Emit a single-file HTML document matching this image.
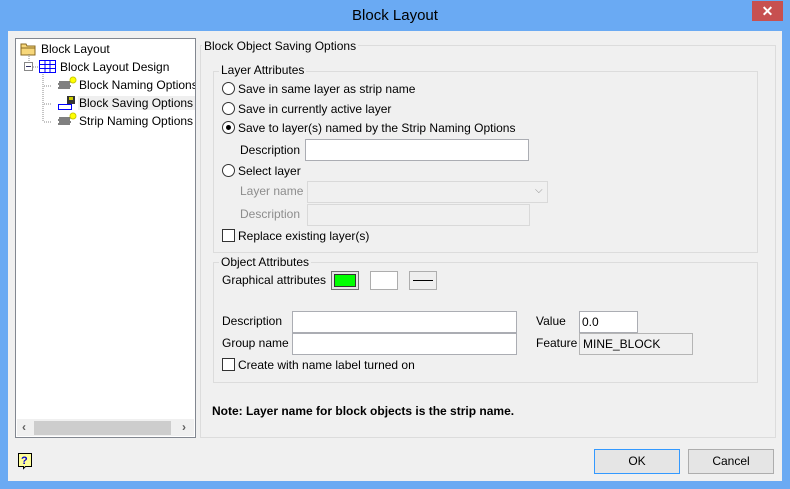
<!DOCTYPE html>
<html><head><style>
*{box-sizing:border-box;margin:0;padding:0}
body{width:790px;height:489px;background:#6aaaf3;font-family:"Liberation Sans",sans-serif;font-size:12px;color:#000;position:relative;overflow:hidden}
.a{position:absolute;white-space:nowrap}
.t{line-height:14px}
.grp{position:absolute;border:1px solid #dcdcdc}
.lbl{position:absolute;background:#f0f0f0;padding:0 2px;line-height:14px}
.in{position:absolute;background:#fff;border:1px solid #abadb3}
.dis{background:#f0f0f0;border:1px solid #d9d9d9}
.rad{position:absolute;width:13px;height:13px;border:1px solid #333;border-radius:50%;background:#fff}
.chk{position:absolute;width:13px;height:13px;border:1px solid #333;background:#fff}
.gray{color:#8d8d8d}
.btn{position:absolute;height:25px;border:1px solid #adadad;background:#e5e5e5;text-align:center;line-height:23px}
</style></head><body>
<div class="a" style="left:0;top:0;width:790px;height:31px;text-align:center;font-size:15px;line-height:31px;color:#000">Block Layout</div>
<div class="a" style="left:752px;top:1px;width:31px;height:20px;background:#c75050;color:#fff;text-align:center;font-size:14px;line-height:20px;font-weight:bold">✕</div>
<div class="a" style="left:8px;top:31px;width:774px;height:450px;background:#f0f0f0"></div>

<!-- tree -->
<div class="a" style="left:15px;top:38px;width:181px;height:400px;background:#fff;border:1px solid #828790;overflow:hidden">
 <svg class="a" style="left:0;top:0" width="62" height="95">
  <path d="M5 5h5l1 2h8v9H5z" fill="#f7d77a" stroke="#8a6a20"/><path d="M5 9h14" stroke="#8a6a20"/>
  <path d="M13 15v8M17 28h6M27 33v50M28 47h8M28 65h8M28 83h8" stroke="#888" stroke-dasharray="1,1"/>
  <rect x="8.5" y="23.5" width="8" height="8" fill="#fff" stroke="#888"/><path d="M10 27.5h5" stroke="#336"/>
  <g stroke="#00f" fill="none"><rect x="23.5" y="21.5" width="16" height="12"/><path d="M29 22v11M34 22v11M24 25.5h15M24 29.5h15"/></g>
  <g stroke="#000"><path d="M43 43h12M42 45h12M43 47h12M42 49h12"/><path d="M43 79h12M42 81h12M43 83h12M42 85h12"/></g>
  <circle cx="57" cy="41" r="3" fill="#ff0" stroke="#cc0"/><circle cx="57" cy="77" r="3" fill="#ff0" stroke="#cc0"/>
  <rect x="42.5" y="65.5" width="13" height="5" fill="#fff" stroke="#00f"/><rect x="51" y="57" width="8" height="8" fill="#333"/><rect x="53" y="58" width="4" height="3" fill="#cc0"/>
 </svg>
 <div class="a t" style="left:25px;top:3px">Block Layout</div>
 <div class="a t" style="left:44px;top:21px">Block Layout Design</div>
 <div class="a t" style="left:63px;top:39px">Block Naming Options</div>
 <div class="a t" style="left:62px;top:57px;background:#efefef;padding:0 1px;width:118px">Block Saving Options</div>
 <div class="a t" style="left:63px;top:75px">Strip Naming Options</div>
 <div class="a" style="left:1px;top:380px;width:177px;height:17px;background:#f0f0f0"></div>
 <div class="a" style="left:18px;top:382px;width:137px;height:14px;background:#cdcdcd"></div>
 <div class="a" style="left:6px;top:381px;color:#606060;font-size:12px;font-weight:bold">‹</div>
 <div class="a" style="left:166px;top:381px;color:#606060;font-size:12px;font-weight:bold">›</div>
</div>

<!-- outer group -->
<div class="grp" style="left:200px;top:45px;width:576px;height:393px"></div>
<div class="lbl" style="left:202px;top:39px">Block Object Saving Options</div>

<div class="grp" style="left:213px;top:71px;width:545px;height:182px"></div>
<div class="lbl" style="left:219px;top:63px">Layer Attributes</div>
<div class="rad" style="left:222px;top:82px"></div><div class="a t" style="left:238px;top:82px">Save in same layer as strip name</div>
<div class="rad" style="left:222px;top:102px"></div><div class="a t" style="left:238px;top:102px">Save in currently active layer</div>
<div class="rad" style="left:222px;top:121px"></div><div class="a" style="left:226px;top:125px;width:5px;height:5px;border-radius:50%;background:#000"></div><div class="a t" style="left:238px;top:121px">Save to layer(s) named by the Strip Naming Options</div>
<div class="a t" style="left:240px;top:143px">Description</div>
<div class="in" style="left:305px;top:139px;width:224px;height:22px"></div>
<div class="rad" style="left:222px;top:164px"></div><div class="a t" style="left:238px;top:164px">Select layer</div>
<div class="a t gray" style="left:240px;top:184px">Layer name</div>
<div class="in dis" style="left:307px;top:181px;width:241px;height:22px"></div>
<div class="a gray" style="left:535px;top:185px;font-size:10px">⌵</div>
<div class="a t gray" style="left:240px;top:207px">Description</div>
<div class="in dis" style="left:307px;top:204px;width:223px;height:22px"></div>
<div class="chk" style="left:222px;top:229px"></div><div class="a t" style="left:238px;top:229px">Replace existing layer(s)</div>

<div class="grp" style="left:213px;top:262px;width:545px;height:121px"></div>
<div class="lbl" style="left:219px;top:255px">Object Attributes</div>
<div class="a t" style="left:222px;top:273px">Graphical attributes</div>
<div class="a" style="left:331px;top:271px;width:28px;height:19px;border:1px solid #707070;padding:2px;background:#e5e5e5"><div style="width:100%;height:100%;background:#00ff00;border:1px solid #333"></div></div>
<div class="a" style="left:370px;top:271px;width:28px;height:19px;border:1px solid #adadad;background:#fff"></div>
<div class="a" style="left:409px;top:271px;width:28px;height:19px;border:1px solid #adadad;background:#eee"><div style="margin:8px 3px 0;height:1px;background:#000"></div></div>
<div class="a t" style="left:222px;top:314px">Description</div>
<div class="in" style="left:292px;top:311px;width:225px;height:22px"></div>
<div class="a t" style="left:222px;top:336px">Group name</div>
<div class="in" style="left:292px;top:333px;width:225px;height:22px"></div>
<div class="a t" style="left:536px;top:314px">Value</div>
<div class="in" style="left:579px;top:311px;width:59px;height:22px;padding:3px 2px">0.0</div>
<div class="a t" style="left:536px;top:336px">Feature</div>
<div class="in" style="left:579px;top:333px;width:114px;height:22px;padding:3px 3px;background:#f0f0f0;border-color:#b5b5b5">MINE_BLOCK</div>
<div class="chk" style="left:222px;top:358px"></div><div class="a t" style="left:238px;top:358px">Create with name label turned on</div>

<div class="a t" style="left:212px;top:404px;font-weight:bold">Note: Layer name for block objects is the strip name.</div>

<svg class="a" style="left:17px;top:452px" width="17" height="18"><path d="M1.5 1.5h13v13h-6l-2 2v-2h-5z" fill="#ffff99" stroke="#000"/><text x="4" y="12" font-size="11" font-weight="bold" fill="#00c" font-family="Liberation Sans">?</text></svg>

<div class="btn" style="left:594px;top:449px;width:86px;border-color:#3399ff">OK</div>
<div class="btn" style="left:688px;top:449px;width:86px">Cancel</div>
</body></html>
